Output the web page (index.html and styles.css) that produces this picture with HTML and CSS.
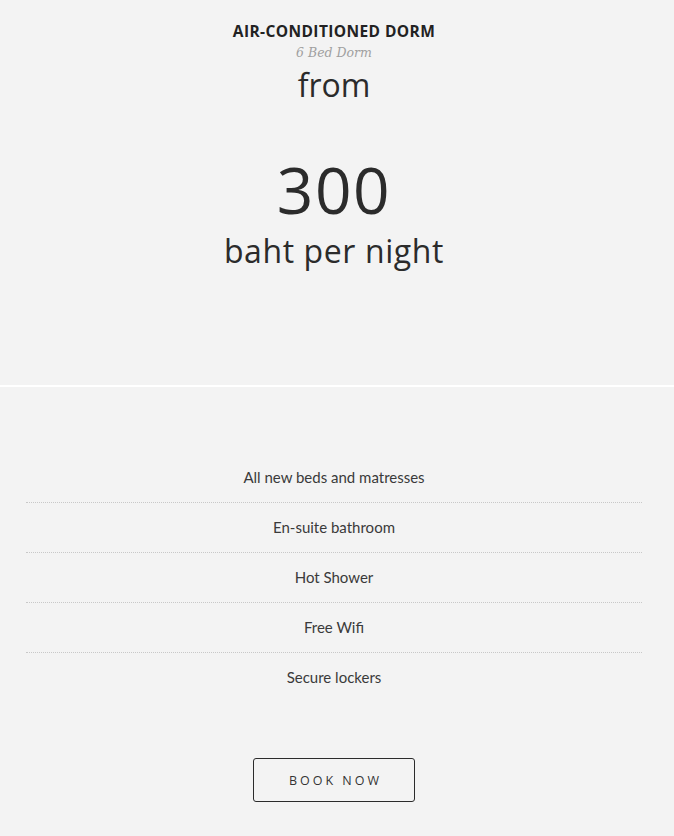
FILE: index.html
```html
<!DOCTYPE html>
<html>
<head>
<meta charset="utf-8">
<link rel="stylesheet" href="styles.css">
</head>
<body>
<div class="card">
  <div class="head">
    <h3 class="title">AIR-CONDITIONED DORM</h3>
    <div class="sub">6 Bed Dorm</div>
    <div class="from">from</div>
    <div class="price">300</div>
    <div class="unit">baht per night</div>
  </div>
  <div class="body">
    <ul class="features">
      <li>All new beds and matresses</li>
      <li>En-suite bathroom</li>
      <li>Hot Shower</li>
      <li>Free Wifi</li>
      <li>Secure lockers</li>
    </ul>
    <a class="btn" href="#">BOOK NOW</a>
  </div>
</div>
</body>
</html>
```
FILE: styles.css
```css
html, body {
  margin: 0;
  padding: 0;
  background: #f3f3f3;
}
.card {
  width: 674px;
  height: 836px;
  background: #f3f3f3;
  font-family: "Open Sans", sans-serif;
  color: #2b2b2b;
}
.head {
  display: flex;
  flex-direction: column;
  align-items: center;
  height: 387px;
  padding-right: 6px;
  border-bottom: 2px solid #ffffff;
  box-sizing: border-box;
}
.title {
  margin: 22px 0 0;
  font-size: 15.5px;
  font-weight: 700;
  line-height: 18px;
  letter-spacing: 0.4px;
  color: #222;
}
.sub {
  font-family: "DejaVu Serif", serif;
  font-style: italic;
  font-size: 12.5px;
  line-height: 18px;
  color: #a0a0a0;
  margin-top: 4px;
}
.from {
  font-size: 32px;
  font-weight: 400;
  line-height: 36px;
  margin-top: 5px;
}
.price {
  font-size: 64px;
  font-weight: 400;
  line-height: 70px;
  letter-spacing: 1.5px;
  margin-top: 52px;
}
.unit {
  font-size: 32px;
  line-height: 36px;
  letter-spacing: 0.6px;
  margin-top: 8px;
}
.body {
  display: flex;
  flex-direction: column;
  align-items: center;
  padding-top: 66px;
  padding-right: 6px;
}
.features {
  list-style: none;
  margin: 0;
  padding: 0;
  width: 616px;
}
.features li {
  font-family: "Lato", sans-serif;
  font-size: 15px;
  color: #3a3a3a;
  text-align: center;
  height: 49px;
  line-height: 49px;
  border-bottom: 1px dotted #c8c8c8;
}
.features li:last-child {
  border-bottom: none;
}
.btn {
  margin-top: 56px;
  display: flex;
  align-items: center;
  justify-content: center;
  width: 162px;
  height: 44px;
  box-sizing: border-box;
  border: 1px solid #2b2b2b;
  border-radius: 3px;
  font-size: 12.5px;
  letter-spacing: 3px;
  padding-left: 3px;
  color: #333;
  text-decoration: none;
}
```
